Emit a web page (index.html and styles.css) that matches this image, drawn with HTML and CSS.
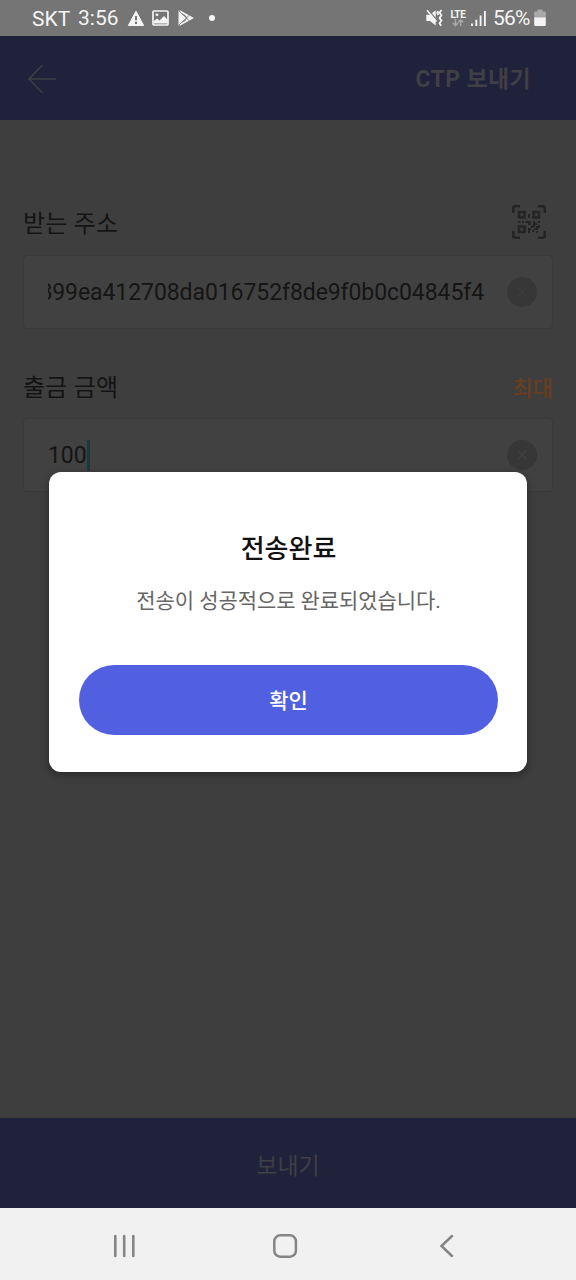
FILE: index.html
```html
<!DOCTYPE html>
<html lang="ko">
<head>
<meta charset="utf-8">
<title>CTP 보내기</title>
<link rel="stylesheet" href="styles.css">
</head>
<body>
<div class="screen">
  <div class="status">
    <div class="status-left">
      <span class="carrier">SKT</span>
      <span class="clock">3:56</span>
      <svg class="warn" width="18" height="17" viewBox="0 0 18 17"><path d="M9 1.2 16.7 15.5H1.3z" fill="#f4f4f4" stroke="#f4f4f4" stroke-linejoin="round"/><path d="M9 6v4.200M9 11.800v2.200" stroke="#757575" stroke-width="2"/></svg>
      <svg class="photo" width="17" height="16" viewBox="0 0 17 16"><rect x="1" y="1" width="15" height="14" rx="1" fill="none" stroke="#f4f4f4" stroke-width="1.700"/><path d="M2 13.500V11l3-2.500 2.500 2L12 6l3.500 3.500v4z" fill="#f4f4f4"/><circle cx="5" cy="4.800" r="1.400" fill="#f4f4f4"/></svg>
      <svg class="play" width="16" height="16" viewBox="0 0 16 16"><path d="M.5.500 8.500 8 .5 15.500z" fill="#f4f4f4"/><path d="M1.500 1 14.200 8 1.500 15M8 11l3-3-3-3" fill="none" stroke="#f4f4f4" stroke-width="1.900"/><path d="M1 1 11.500 11M1 15 11.500 5" stroke="#757575" stroke-width=".8"/></svg>
      <span class="dot"></span>
    </div>
    <div class="status-right">
      <svg class="mute" width="17" height="18" viewBox="0 0 17 18"><path d="M.3 5.800H4l5.700-4.500v15.200L4 12H.3z" fill="#f4f4f4"/><path d="m2.500 1.200 9 10.500" stroke="#757575" stroke-width="1.400"/><path d="m1 1.200 9.500 11.300" stroke="#f4f4f4" stroke-width="1.500"/><path d="m12.200 2-1 2 1.200 2M15.500 1l-2 2.700 2 2.600-2 2.600 2 2.700-2 2.600 1.700 2.500" fill="none" stroke="#f4f4f4" stroke-width="1.800"/></svg>
      <span class="lte"><span class="lte-text">LTE</span><svg width="12" height="8" viewBox="0 0 12 8"><path d="M3.500 0v6M1 4l2.500 2.600L6 4M8.700 7V1M6.200 3.200 8.700.8l2.500 2.400" fill="none" stroke="#a9a9a9" stroke-width="1.500"/></svg></span>
      <svg class="signal" width="15" height="17" viewBox="0 0 15 17"><path d="M1 16v-2.500M5.300 16V9.800M9.600 16V5.600M13.900 16V1" stroke="#f4f4f4" stroke-width="1.900"/></svg>
      <span class="percent">56%</span>
      <svg class="battery" width="12" height="18" viewBox="0 0 12 18"><path d="M3.500.5h5v2h2q1.300 0 1.300 1.300V9H.2V3.800Q.2 2.500 1.500 2.500h2z" fill="#a9a9a9"/><path d="M.2 8.600h11.600v7.200q0 1.200-1.200 1.200H1.400Q.2 17 .2 15.800z" fill="#f4f4f4"/></svg>
    </div>
  </div>
  <header class="header">
    <svg width="30" height="30" viewBox="0 0 30 30"><path d="M29 15H2M15.500 1 2 15l13.500 14" fill="none" stroke="#3f3f45" stroke-width="1.500"/></svg>
    <h1 class="title">CTP 보내기</h1>
  </header>
  <main class="form">
    <div class="label-row">
      <span class="label">받는 주소</span>
      <svg class="qr" width="34" height="34" viewBox="0 0 34 34"><g fill="none" stroke="#242424" stroke-width="2.600"><path d="M1.300 8V3.300q0-2 2-2H8M26 1.300h4.700q2 0 2 2V8M32.700 26v4.700q0 2-2 2H26M8 32.700H3.300q-2 0-2-2V26"/><path d="M7 7h5.500v5.500H7zM21.500 7H27v5.500h-5.500zM7 21.500h5.500V27H7z"/></g><path d="M16 9h2v4h-2zM6 16h2.500v2H6zM10 16h2v2h-2zM13.500 16h5v4H16v-2h-2.500zM21 16h2v2h2v2h-2v2h-3v-2h1zM26 16h2v2h-2zM16 23h3v2h-1v3h-2zM19 21h2v2h-2zM22 23h2v2h-2zM24 21h2v-1h2v3h-2v2h-2zM20 25h2v2h-2zM24 26h2v2h-2z" fill="#242424"/></svg>
    </div>
    <div class="field">
      <span class="value address">899ea412708da016752f8de9f0b0c04845f4</span>
      <svg class="clear" width="30" height="30" viewBox="0 0 30 30"><circle cx="15" cy="15" r="15" fill="#373737"/><path d="m10.500 10.500 9 9m0-9-9 9" stroke="#3d3d3d" stroke-width="1.300"/></svg>
    </div>
    <div class="label-row second">
      <span class="label">출금 금액</span>
      <span class="max">최대</span>
    </div>
    <div class="field">
      <span class="value">100<span class="caret"></span></span>
      <svg class="clear" width="30" height="30" viewBox="0 0 30 30"><circle cx="15" cy="15" r="15" fill="#373737"/><path d="m10.500 10.500 9 9m0-9-9 9" stroke="#404040" stroke-width="1.400"/></svg>
    </div>
  </main>
  <div class="send">보내기</div>
  <nav class="nav">
    <svg width="22" height="24" viewBox="0 0 22 24"><path d="M2.300 2v20M11.200 2v20M20.300 2v20" stroke="#858585" stroke-width="2.600" stroke-linecap="round"/></svg>
    <svg width="26" height="26" viewBox="0 0 26 26"><rect x="2.300" y="2.300" width="21.600" height="21.400" rx="6" fill="none" stroke="#858585" stroke-width="2.500"/></svg>
    <svg width="16" height="24" viewBox="0 0 16 24"><path d="M13 2 2.500 12 13 22" fill="none" stroke="#858585" stroke-width="2.500" stroke-linecap="round"/></svg>
  </nav>
  <section class="dialog">
    <h2 class="dialog-title">전송완료</h2>
    <p class="message">전송이 성공적으로 완료되었습니다.</p>
    <button class="confirm">확인</button>
  </section>
</div>
</body>
</html>
```
FILE: styles.css
```css
* { box-sizing: border-box; }
body { margin: 0; font-family: Roboto, "Noto Sans CJK KR", sans-serif; }
svg { display: block; flex: none; }
.screen { position: relative; width: 576px; height: 1280px; display: flex; flex-direction: column; background: #3e3e3e; overflow: hidden; }
.status { height: 36px; flex: none; display: flex; justify-content: space-between; padding: 0 30px 0 32px; background: #757575; color: #f4f4f4; font-size: 21px; line-height: 37px; }
.status-left, .status-right { display: flex; align-items: center; }
.carrier { width: 46px; padding-top: 2px; }
.clock { width: 49px; padding-top: 1px; }
.photo { margin-left: 7px; }
.play { margin-left: 9px; }
.dot { width: 6px; height: 6px; margin-left: 15px; border-radius: 50%; background: #f4f4f4; }
.lte { display: flex; flex-direction: column; align-items: center; margin-left: 6px; width: 18px; }
.lte-text { font-size: 10px; line-height: 9px; font-weight: 700; letter-spacing: -.3px; }
.signal { margin-left: 4px; }
.percent { margin-left: 7px; width: 41px; padding-top: 1px; letter-spacing: -.8px; }
.battery { margin-left: 0; }
.header { height: 84px; flex: none; display: flex; align-items: center; justify-content: space-between; padding: 2px 45px 0 27px; background: #20213b; }
.title { margin: 0; padding-top: 2px; font-size: 23px; line-height: 34px; font-weight: 700; letter-spacing: .35px; color: #3f3f45; }
.form { flex: 1; padding: 80px 23px 0; }
.label-row { height: 44px; display: flex; align-items: center; justify-content: space-between; }
.label { padding-top: 4px; font-size: 24px; line-height: 36px; letter-spacing: .2px; color: #141414; }
.second .label { padding-top: 6px; }
.qr { margin-right: 7px; }
.field { height: 74px; margin-top: 11px; display: flex; align-items: center; justify-content: space-between; padding: 0 15px 0 24px; background: #414141; border: 1px solid #393939; border-radius: 4px; }
.value { display: flex; align-items: center; padding-top: 2px; font-size: 23px; line-height: 36px; letter-spacing: -.08px; color: #151515; }
.address { width: 436px; overflow: hidden; justify-content: flex-end; }
.caret { width: 3px; height: 31px; margin-top: -2px; background: #173c38; }
.second { margin-top: 34px; }
.max { padding-top: 8px; font-size: 22px; line-height: 34px; font-weight: 500; color: #683e20; }
.send { height: 90px; flex: none; display: flex; align-items: center; justify-content: center; padding-top: 1px; background: #20213b; font-size: 23px; color: #3f3f45; }
.nav { height: 72px; flex: none; display: flex; align-items: center; padding: 4px 0 0 113px; background: #f1f1f1; }
.nav svg:nth-child(2) { margin-left: 137px; }
.nav svg:nth-child(3) { margin-left: 141px; }
.dialog { position: absolute; left: 49px; top: 472px; width: 478px; height: 300px; display: flex; flex-direction: column; align-items: center; padding: 58px 29px 37px 30px; background: #fff; border-radius: 12px; box-shadow: 0 3px 8px rgba(0,0,0,.35); }
.dialog-title { margin: 0; font-size: 26px; line-height: 38px; font-weight: 500; color: #111; }
.message { margin: 18px 0 0; font-size: 21px; line-height: 30px; letter-spacing: -.08px; color: #666; white-space: nowrap; }
.confirm { width: 100%; height: 70px; margin-top: auto; padding: 2px 0 0; border: 0; border-radius: 35px; background: #515fe1; color: #fff; font: 500 21px/32px Roboto, "Noto Sans CJK KR", sans-serif; }
```
